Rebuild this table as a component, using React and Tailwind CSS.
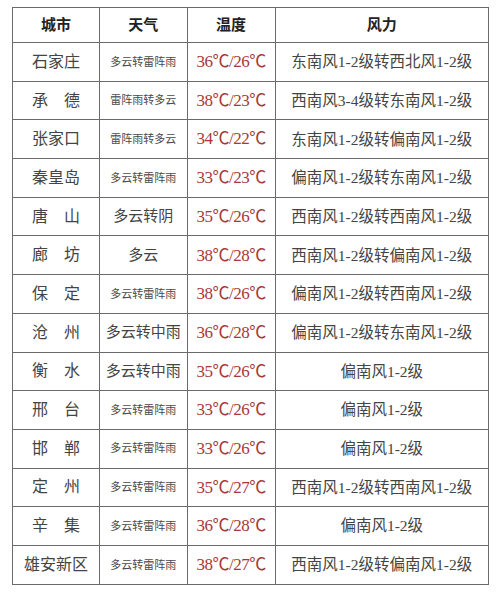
import React from 'react';

const rows = [
  { city: '石家庄', weather: '多云转雷阵雨', small: true, temp: '36℃/26℃', wind: '东南风1-2级转西北风1-2级' },
  { city: '承\u3000德', weather: '雷阵雨转多云', small: true, temp: '38℃/23℃', wind: '西南风3-4级转东南风1-2级' },
  { city: '张家口', weather: '雷阵雨转多云', small: true, temp: '34℃/22℃', wind: '东南风1-2级转偏南风1-2级' },
  { city: '秦皇岛', weather: '多云转雷阵雨', small: true, temp: '33℃/23℃', wind: '偏南风1-2级转东南风1-2级' },
  { city: '唐\u3000山', weather: '多云转阴', small: false, temp: '35℃/26℃', wind: '西南风1-2级转西南风1-2级' },
  { city: '廊\u3000坊', weather: '多云', small: false, temp: '38℃/28℃', wind: '西南风1-2级转偏南风1-2级' },
  { city: '保\u3000定', weather: '多云转雷阵雨', small: true, temp: '38℃/26℃', wind: '偏南风1-2级转西南风1-2级' },
  { city: '沧\u3000州', weather: '多云转中雨', small: false, temp: '36℃/28℃', wind: '偏南风1-2级转东南风1-2级' },
  { city: '衡\u3000水', weather: '多云转中雨', small: false, temp: '35℃/26℃', wind: '偏南风1-2级' },
  { city: '邢\u3000台', weather: '多云转雷阵雨', small: true, temp: '33℃/26℃', wind: '偏南风1-2级' },
  { city: '邯\u3000郸', weather: '多云转雷阵雨', small: true, temp: '33℃/26℃', wind: '偏南风1-2级' },
  { city: '定\u3000州', weather: '多云转雷阵雨', small: true, temp: '35℃/27℃', wind: '西南风1-2级转西南风1-2级' },
  { city: '辛\u3000集', weather: '多云转雷阵雨', small: true, temp: '36℃/28℃', wind: '偏南风1-2级' },
  { city: '雄安新区', weather: '多云转雷阵雨', small: true, temp: '38℃/27℃', wind: '西南风1-2级转偏南风1-2级' },
];

const font = { fontFamily: '"Liberation Serif", "Noto Sans CJK SC", serif' };

export default function App() {
  return (
    <div className="w-[500px] h-[608px] bg-white pt-[7px] pl-[12px]" style={font}>
      <table className="w-[477px] border-collapse border-[1.5px] border-[#6b6b6b] text-center">
        <colgroup>
          <col className="w-[87px]" />
          <col className="w-[88px]" />
          <col className="w-[88px]" />
          <col className="w-[214px]" />
        </colgroup>
        <thead>
          <tr className="h-[35px] text-[15px] font-semibold text-[#222]">
            <th className="border-[1.5px] border-[#6b6b6b]">城市</th>
            <th className="border-[1.5px] border-[#6b6b6b]">天气</th>
            <th className="border-[1.5px] border-[#6b6b6b]">温度</th>
            <th className="border-[1.5px] border-[#6b6b6b]">风力</th>
          </tr>
        </thead>
        <tbody>
          {rows.map((r, i) => (
            <tr key={i} className="h-[38.7px]">
              <td className="border-[1.5px] border-[#6b6b6b] text-[16px] text-[#444]">{r.city}</td>
              <td
                className={
                  r.small
                    ? 'border-[1.5px] border-[#6b6b6b] text-[11px] text-[#4a4a4a]'
                    : 'border-[1.5px] border-[#6b6b6b] text-[15px] text-[#444]'
                }
              >
                {r.weather}
              </td>
              <td className="border-[1.5px] border-[#6b6b6b] text-[17px] text-[#a83838] tracking-[-0.5px]">{r.temp}</td>
              <td className="border-[1.5px] border-[#6b6b6b] text-[15.5px] text-[#444]">{r.wind}</td>
            </tr>
          ))}
        </tbody>
      </table>
    </div>
  );
}
